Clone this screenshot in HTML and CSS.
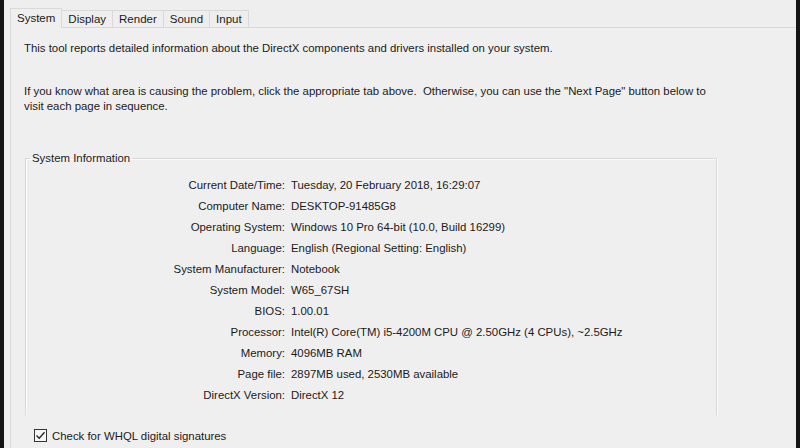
FILE: index.html
```html
<!DOCTYPE html>
<html>
<head>
<meta charset="utf-8">
<link rel="stylesheet" href="styles.css">
</head>
<body>
<div class="window">
  <div class="tabs">
    <div class="tab active">System</div>
    <div class="tab">Display</div>
    <div class="tab">Render</div>
    <div class="tab">Sound</div>
    <div class="tab">Input</div>
  </div>
  <div class="panel">
    <p class="intro">This tool reports detailed information about the DirectX components and drivers installed on your system.</p>
    <p class="hint">If you know what area is causing the problem, click the appropriate tab above.&nbsp; Otherwise, you can use the "Next Page" button below to visit each page in sequence.</p>
    <fieldset class="group">
      <legend>System Information</legend>
      <div class="info">
        <span class="label">Current Date/Time:</span><span class="value">Tuesday, 20 February 2018, 16:29:07</span>
        <span class="label">Computer Name:</span><span class="value">DESKTOP-91485G8</span>
        <span class="label">Operating System:</span><span class="value">Windows 10 Pro 64-bit (10.0, Build 16299)</span>
        <span class="label">Language:</span><span class="value">English (Regional Setting: English)</span>
        <span class="label">System Manufacturer:</span><span class="value">Notebook</span>
        <span class="label">System Model:</span><span class="value">W65_67SH</span>
        <span class="label">BIOS:</span><span class="value">1.00.01</span>
        <span class="label">Processor:</span><span class="value">Intel(R) Core(TM) i5-4200M CPU @ 2.50GHz (4 CPUs), ~2.5GHz</span>
        <span class="label">Memory:</span><span class="value">4096MB RAM</span>
        <span class="label">Page file:</span><span class="value">2897MB used, 2530MB available</span>
        <span class="label">DirectX Version:</span><span class="value">DirectX 12</span>
      </div>
    </fieldset>
    <label class="check">
      <span class="box"><svg width="11" height="11" viewBox="0 0 11 11"><path d="M1.5 5.5 L4.2 8.3 L9.5 2.2" fill="none" stroke="#222" stroke-width="1.3"/></svg></span>
      <span>Check for WHQL digital signatures</span>
    </label>
  </div>
</div>
</body>
</html>
```
FILE: styles.css
```css
html, body {
  margin: 0;
  padding: 0;
  height: 100%;
}
body {
  background: #141414;
  font-family: "Liberation Sans", Arial, sans-serif;
  font-size: 11.4px;
  color: #1a1a1a;
  overflow: hidden;
}
.window {
  margin: 0 4px;
  height: 448px;
  background: #eeeeee;
  padding-top: 8px;
  box-sizing: border-box;
}
.tabs {
  display: flex;
  align-items: flex-end;
  margin-left: 6px;
  height: 19px;
}
.tab {
  height: 17px;
  line-height: 16px;
  padding: 0 6px;
  border: 1px solid #d9d9d9;
  border-bottom: none;
  border-left: none;
  box-sizing: border-box;
  background: #eeeeee;
  font-size: 11.5px;
}
.tab.active {
  height: 20px;
  line-height: 19px;
  border-left: 1px solid #d9d9d9;
  background: #f0eff0;
  position: relative;
  z-index: 1;
  margin-bottom: -1px;
  padding: 0 6px;
}
.panel {
  margin-left: 6px;
  border: 1px solid #d9d9d9;
  border-right: none;
  border-bottom: none;
  background: #f0eff0;
  height: 421px;
  box-sizing: border-box;
  padding: 13px 0 0 13px;
}
.intro, .hint {
  margin: 0;
  line-height: 15px;
}
.hint {
  margin-top: 28px;
  width: 690px;
}
.group {
  margin: 37px 0 0 1px;
  width: 692px;
  box-sizing: border-box;
  border: 1px solid #d8d8d8;
  border-bottom-color: transparent;
  box-shadow: inset 1px 1px 0 #fbfbfb, 1px 0 0 #fbfbfb;
  padding: 8px 0 6px 0;
  height: 265px;
}
.group legend {
  padding: 0 2px;
  margin-left: 4px;
  line-height: 15px;
}
.info {
  display: grid;
  grid-template-columns: 259px auto;
  column-gap: 6px;
  grid-auto-rows: 21.1px;
  align-items: center;
}
.label {
  text-align: right;
}
.check {
  display: flex;
  align-items: center;
  gap: 5px;
  margin: 13px 0 0 10px;
}
.box {
  width: 11px;
  height: 11px;
  border: 1px solid #333;
  background: #f6f6f6;
  display: flex;
}
```
